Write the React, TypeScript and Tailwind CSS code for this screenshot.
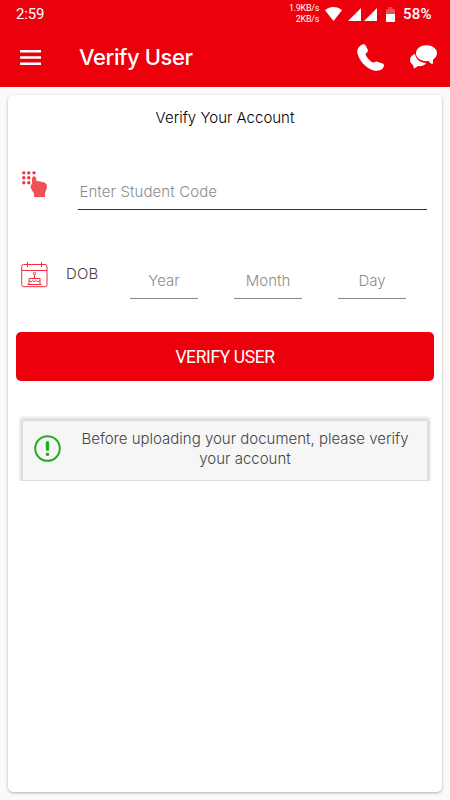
import { useState } from "react";

const dobFields = [
    { name: "year", label: "Year" },
    { name: "month", label: "Month" },
    { name: "day", label: "Day" },
];

function StatusBar() {
    return (
        <div className="flex h-7 items-center pl-4 pr-[17px] font-['Roboto',sans-serif] text-white">
            <span className="text-[15px] font-normal tracking-[-0.2px]">2:59</span>
            <div className="ml-auto mr-[6px] text-right text-[9px] font-normal leading-[11px] tracking-[-0.3px]">
                <p>1.9KB/s</p>
                <p>2KB/s</p>
            </div>
            <svg className="mr-[6px] h-[14px] w-[17px]" viewBox="0 0 17 14" fill="currentColor">
                <path d="M0 3.2C5-1 12-1 17 3.2L8.5 14z" />
            </svg>
            <svg className="mr-[9px] h-[13px] w-[29px]" viewBox="0 0 29 13" fill="currentColor">
                <path d="M13 0v13H0zM29 0v13H16z" />
            </svg>
            <svg className="mr-[8px] h-[15px] w-[9px]" viewBox="0 0 9 15" fill="currentColor">
                <path d="M2.5 0h4v2H8a1 1 0 0 1 1 1v4H0V3a1 1 0 0 1 1-1h1.500z" opacity=".3" />
                <path d="M0 7h9v7a1 1 0 0 1-1 1H1a1 1 0 0 1-1-1z" />
            </svg>
            <span className="w-[30px] whitespace-nowrap text-[15px] font-medium tracking-[0.2px]">58%</span>
        </div>
    );
}

function MenuIcon() {
    return (
        <svg className="h-[15px] w-[21px]" viewBox="0 0 21 15" fill="currentColor">
            <path d="M0 0h21v2.600H0zM0 6.200h21v2.600H0zM0 12.400h21V15H0z" />
        </svg>
    );
}

function PhoneIcon() {
    return (
        <svg className="size-[27px]" viewBox="0 0 27 27" fill="currentColor">
            <path d="M3 2C5 .1 7.600-.6 8.600 1.500l2.100 4c.8 1.700-.6 2.700-2 4.300-1 1.400 4.500 7.800 7.300 8.800 1.500.3 2.600-1.400 4.200-.9l5.500 1.900c2 .9 1.300 3.600-.4 5.200-3.300 3-8.300 2.400-13.300-.4C6 21 1.500 14.500.3 8.800-.1 6 1 4 3 2z" />
        </svg>
    );
}

function ChatIcon() {
    return (
        <svg className="h-6 w-[27px]" viewBox="0 0 27 24" fill="currentColor">
            <path d="M5 8.700C2 10 0 12.300 0 15c0 2 1 3.600 2.900 4.900.5 1 .7 2.200 1 3.700 1.600-.4 2.800-1.300 4-2.500 3.300.5 6.500-.6 8.300-3.200C10.500 18 5.600 14.500 5 8.700z" />
            <path d="M16.500.3C22.300.3 27 3.800 27 8.200c0 2.600-1.600 4.800-4 6.200 0 1.700.1 3.200-.5 4.900-1.500-.6-2.800-1.800-4-3.300-7 .9-12.500-2.800-12.500-7.800C6 3.800 10.700.3 16.500.3z" />
        </svg>
    );
}

function KeypadIcon() {
    return (
        <svg className="h-7 w-[25px]" viewBox="0 0 25 28">
            <g fill="#f0323c">
                <circle cx="1.800" cy="1.800" r="1.700" />
                <circle cx="6.800" cy="1.800" r="1.700" />
                <circle cx="12" cy="1.800" r="1.700" />
                <circle cx="1.800" cy="6.800" r="1.700" />
                <circle cx="6.800" cy="6.800" r="1.700" />
                <circle cx="1.800" cy="11.800" r="1.700" />
                <circle cx="6.800" cy="11.800" r="1.700" />
            </g>
            <path
                d="M10.500 7.300c0-2.200 3.300-2.200 3.300 0v3c1.200-.4 2.500-.1 3.200.5 1.200-.3 2.300 0 2.900.8 2.600-.2 4.700 1.100 4.700 3.600 0 3.200-1.700 4.700-1.900 7.200v3.300H12.500v-3.200l-2.900-4.400c-.8-2.200-.7-4.600.9-5.200z"
                fill="#f25058"
                stroke="#ef343e"
                strokeWidth=".7"
            />
        </svg>
    );
}

function BirthdayIcon() {
    return (
        <svg className="h-[26px] w-[27px]" viewBox="0 0 27 26" fill="none" stroke="#f0303c">
            <rect x=".7" y="2.500" width="25.300" height="22.200" rx="2" />
            <path d="M.7 8.500H26M6.500 0v5M20.500 0v5" />
            <path d="M6.500 22.500h14M8 22v-5.500h11V22M8 18.500c1.500 1.500 2.700 1.500 3.700 0 1.200 1.500 2.400 1.500 3.600 0 1 1.500 2.200 1.500 3.700 0M13.500 16v-3" />
            <circle cx="13.500" cy="11.500" r="1.200" />
        </svg>
    );
}

export default function App() {
    const [studentCode, setStudentCode] = useState("");
    const [dob, setDob] = useState<Record<string, string>>({});

    return (
        <div className="flex h-[800px] w-[450px] flex-col bg-[#fafafa] font-['Inter',sans-serif] font-light">
            <header className="h-[87px] shrink-0 bg-[#eb000b] text-white">
                <StatusBar />
                <div className="flex h-[58px] items-center pl-5 pr-[13px]">
                    <button aria-label="Menu">
                        <MenuIcon />
                    </button>
                    <h1 className="ml-[38px] text-[22px] font-medium tracking-[-0.4px]">Verify User</h1>
                    <div className="ml-auto flex items-center gap-[26px]">
                        <PhoneIcon />
                        <ChatIcon />
                    </div>
                </div>
            </header>

            <main className="mx-2 mb-2 mt-2 flex-1 rounded-[5px] bg-white px-2 shadow-[0_1px_3px_rgba(0,0,0,0.3)]">
                <h2 className="pt-3 text-center text-[15px] leading-[22px] text-black">Verify Your Account</h2>

                <form onSubmit={(e) => e.preventDefault()}>
                    <div className="mt-[42px] flex h-[39px] pl-[6px] pr-[7px]">
                        <KeypadIcon />
                        <input
                            value={studentCode}
                            onChange={(e) => setStudentCode(e.target.value)}
                            className="ml-[31px] h-full w-[350px] border-b border-[#303030] pl-[1.5px] pt-[3px] text-[15px] tracking-[0.09px] text-black outline-none placeholder:text-[#8c8c8c]"
                            placeholder="Enter Student Code"
                        />
                    </div>

                    <div className="mt-[52px] flex h-[37px] pl-[5px]">
                        <BirthdayIcon />
                        <label className="ml-[18px] w-16 text-[15px] leading-6 tracking-[0.2px] text-[#444]">DOB</label>
                        <div className="flex gap-[36px]">
                            {dobFields.map((field) => (
                                <input
                                    key={field.name}
                                    value={dob[field.name] ?? ""}
                                    onChange={(e) => setDob({ ...dob, [field.name]: e.target.value })}
                                    className="h-full w-[68px] border-b border-[#858585] text-center text-[15px] outline-none placeholder:text-[#8c8c8c]"
                                    placeholder={field.label}
                                />
                            ))}
                        </div>
                    </div>

                    <button className="mt-[33px] h-[49px] w-full rounded-[5px] bg-[#eb000b] pt-px font-['Roboto',sans-serif] text-[17.5px] font-normal tracking-[-0.4px] text-white">
                        VERIFY USER
                    </button>
                </form>

                {/* the wrapper cuts the notice's shadow off at the bottom */}
                <div className="ml-[3px] mr-[3px] mt-[34px] overflow-hidden rounded-t-[4px] px-[4px] pt-[6px]">
                    <div className="flex h-[60px] items-center border-b border-[#dedede] bg-[#f6f6f6] pl-[11px] shadow-[0_0_4px_3px_rgba(0,0,0,0.16)]">
                        <svg className="mt-[-4px] size-[27px] shrink-0" viewBox="0 0 27 27" fill="none" stroke="#22ad1f">
                            <circle cx="13.500" cy="13.500" r="12.300" strokeWidth="2" />
                            <path d="M13.500 7.800v6.500M13.500 19.300v.1" strokeWidth="3.400" strokeLinecap="round" />
                        </svg>
                        <p className="ml-[12px] mt-[-4px] w-[344px] text-center text-[15px] leading-[19.500px] text-[#444]">
                            Before uploading your document, please verify your account
                        </p>
                    </div>
                </div>
            </main>
        </div>
    );
}
